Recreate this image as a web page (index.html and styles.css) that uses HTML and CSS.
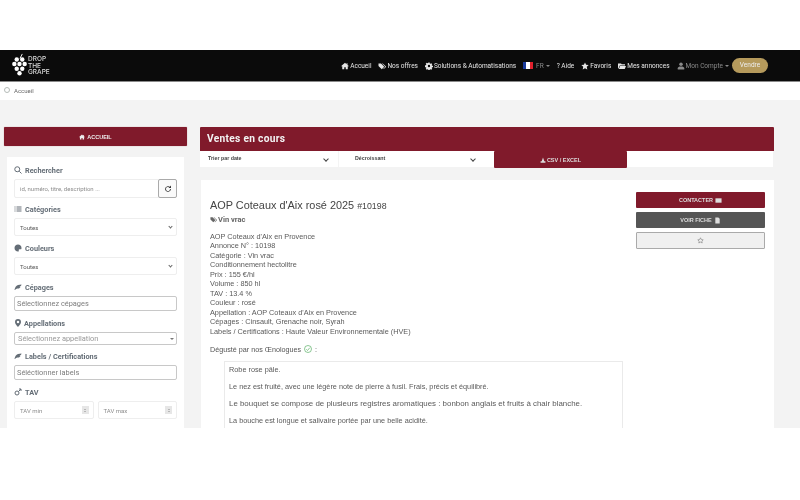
FILE: index.html
```html
<!DOCTYPE html>
<html lang="fr">
<head>
<meta charset="utf-8">
<title>Drop The Grape</title>
<link rel="stylesheet" href="styles.css">
</head>
<body>
<svg class="defs" width="0" height="0" aria-hidden="true">
  <symbol id="i-home" viewBox="0 0 16 16"><path d="M8 1.500 0.500 8l1 1L2.500 8.300V14.500h4v-4h3v4h4V8.300l1 .7 1-1-2.500-2.200V2.500h-2v2.200z" fill="currentColor"/></symbol>
  <symbol id="i-tags" viewBox="0 0 16 16"><path d="M1 3v5l6.500 6.500 5-5L6 3z M8 3l6.500 6.500-4 4 1 .5 5-4.500L9.500 3z" fill="currentColor"/></symbol>
  <symbol id="i-cog" viewBox="0 0 16 16"><path fill-rule="evenodd" d="M6.700 1h2.600l.3 2 1.300.6 1.700-1.100 1.900 1.900-1.100 1.700.6 1.300 2 .3v2.600l-2 .3-.6 1.300 1.100 1.700-1.900 1.900-1.700-1.100-1.300.6-.3 2H6.700l-.3-2-1.300-.6-1.700 1.100-1.900-1.900 1.100-1.700-.6-1.300-2-.3V6.700l2-.3.6-1.300-1.100-1.700 1.900-1.900 1.700 1.100 1.300-.6zM8 5.600a2.400 2.400 0 1 0 0 4.800 2.400 2.400 0 0 0 0-4.800z" fill="currentColor"/></symbol>
  <symbol id="i-star" viewBox="0 0 16 16"><path d="m8 .8 2.200 4.800 5.200.6-3.900 3.500 1.100 5.200L8 12.300l-4.600 2.600 1.100-5.200L.6 6.200l5.200-.6z" fill="currentColor"/></symbol>
  <symbol id="i-folder" viewBox="0 0 16 16"><path d="M0 3h6l1.500 1.500H14V7H3.500L1 13H0zM4.200 8H16l-2.500 6H1.700z" fill="currentColor"/></symbol>
  <symbol id="i-user" viewBox="0 0 16 16"><circle cx="8" cy="4.500" r="3.500" fill="currentColor"/><path d="M1.500 15v-2.500C1.500 10 4 9 8 9s6.500 1 6.500 3.500V15z" fill="currentColor"/></symbol>
  <symbol id="i-leaf" viewBox="0 0 16 16"><path d="M1 14C2 9 4 5 8 4l7-1-1 3-3 1 2 1-3 3H7l-3 1-2 2z" fill="currentColor"/></symbol>
  <symbol id="i-down" viewBox="0 0 16 16"><path d="M8 1 4.500 11H1.500v4h13v-4h-3z" fill="currentColor"/></symbol>
</svg>
<div class="topgap"></div>
<nav class="navbar">
  <a class="logo">
    <svg class="logo-mark" viewBox="0 0 16 26" width="17" height="24">
      <path d="M8.500 6 11 1" stroke="#fff" stroke-width="1" fill="none"/>
      <g fill="#fff">
        <circle cx="5" cy="7" r="2.400"/><circle cx="11" cy="7" r="2.400"/>
        <circle cx="2.400" cy="12" r="2.400"/><circle cx="8" cy="12" r="2.400"/><circle cx="13.600" cy="12" r="2.400"/>
        <circle cx="5" cy="17" r="2.400"/><circle cx="11" cy="17" r="2.400"/>
        <circle cx="8" cy="22" r="2.400"/>
      </g>
    </svg>
    <span class="logo-text">DROP<br>THE<br>GRAPE</span>
  </a>
  <div class="menu">
    <a class="item"><svg class="ic"><use href="#i-home"/></svg>Accueil</a>
    <a class="item"><svg class="ic"><use href="#i-tags"/></svg>Nos offres</a>
    <a class="item"><svg class="ic"><use href="#i-cog"/></svg>Solutions &amp; Automatisations</a>
    <a class="item muted"><span class="flag"><i class="fb"></i><i class="fw"></i><i class="fr"></i></span>FR <span class="caret"></span></a>
    <a class="item">? Aide</a>
    <a class="item"><svg class="ic"><use href="#i-star"/></svg>Favoris</a>
    <a class="item"><svg class="ic"><use href="#i-folder"/></svg>Mes annonces</a>
    <a class="item muted"><svg class="ic"><use href="#i-user"/></svg>Mon Compte <span class="caret"></span></a>
    <a class="sell">Vendre</a>
  </div>
</nav>
<div class="crumb"><span class="crumb-dot"></span>Accueil</div>
<div class="page">
  <aside class="side">
    <a class="home-btn"><svg class="ic"><use href="#i-home"/></svg>ACCUEIL</a>
    <form class="filters">
      <div class="lab"><svg class="lab-ic" viewBox="0 0 16 16"><circle cx="6.500" cy="6.500" r="5" fill="none" stroke="currentColor" stroke-width="2"/><path d="m10.500 10.500 4.500 4.500" stroke="currentColor" stroke-width="2"/></svg>Rechercher</div>
      <div class="search">
        <span class="ph grow">id, numéro, titre, description ...</span>
        <span class="refresh"><svg viewBox="0 0 16 16" width="8" height="8"><path d="M13 8a5 5 0 1 1-1.500-3.500" fill="none" stroke="#333" stroke-width="1.800"/><path d="M14 1v5H9z" fill="#333"/></svg></span>
      </div>
      <div class="lab"><svg class="lab-ic" viewBox="0 0 16 16"><path d="M1 3h2v2H1zM5 3h10v2H5zM1 7h2v2H1zM5 7h10v2H5zM1 11h2v2H1zM5 11h10v2H5z" fill="currentColor"/></svg>Catégories</div>
      <div class="field"><span class="val grow">Toutes</span><span class="chev"></span></div>
      <div class="lab"><svg class="lab-ic" viewBox="0 0 16 16"><path fill-rule="evenodd" d="M8 1C4 1 1 4 1 8s3 7 7 7c1.500 0 2-1 1.500-2s0-2.500 1.500-2.500h2.500C15 10.500 15 9 15 8c0-4-3-7-7-7z" fill="currentColor"/></svg>Couleurs</div>
      <div class="field"><span class="val grow">Toutes</span><span class="chev"></span></div>
      <div class="lab"><svg class="lab-ic"><use href="#i-leaf"/></svg>Cépages</div>
      <div class="multi"><span class="ph2">Sélectionnez cépages</span></div>
      <div class="lab lab-tight"><svg class="lab-ic" viewBox="0 0 16 16"><path fill-rule="evenodd" d="M8 0a6 6 0 0 0-6 6c0 4 6 10 6 10s6-6 6-10a6 6 0 0 0-6-6zm0 3.500a2.500 2.500 0 1 1 0 5 2.500 2.500 0 0 1 0-5z" fill="currentColor"/></svg>Appellations</div>
      <div class="multi appel"><span class="ph2 grow">Sélectionnez appellation</span><span class="tri"></span></div>
      <div class="lab"><svg class="lab-ic"><use href="#i-leaf"/></svg>Labels / Certifications</div>
      <div class="multi"><span class="ph2">Séléctionner labels</span></div>
      <div class="lab"><svg class="lab-ic" viewBox="0 0 16 16"><circle cx="6" cy="10" r="4" fill="none" stroke="currentColor" stroke-width="2"/><path d="m9 7 5-5M10 2h4v4" stroke="currentColor" stroke-width="2" fill="none"/></svg>TAV</div>
      <div class="range">
        <div class="num"><span class="ph grow">TAV min</span><span class="spin"></span></div>
        <div class="num"><span class="ph grow">TAV max</span><span class="spin"></span></div>
      </div>
    </form>
  </aside>
  <main class="main">
    <h1 class="title">Ventes en cours</h1>
    <div class="sort">
      <div class="sort-sel"><span class="grow">Trier par date</span><span class="chev dark"></span></div>
      <div class="sort-sel second"><span class="grow">Décroissant</span><span class="chev dark"></span></div>
      <a class="csv"><svg class="ic"><use href="#i-down"/></svg>CSV / EXCEL</a>
    </div>
    <article class="card">
      <div class="body">
        <h2 class="name">AOP Coteaux d'Aix rosé 2025 <small>#10198</small></h2>
        <div class="type"><svg class="ic"><use href="#i-tags"/></svg>Vin vrac</div>
        <ul class="specs">
          <li>AOP Coteaux d'Aix en Provence</li>
          <li>Annonce N° : 10198</li>
          <li>Catégorie : Vin vrac</li>
          <li>Conditionnement hectolitre</li>
          <li>Prix : 155 €/hl</li>
          <li>Volume : 850 hl</li>
          <li>TAV : 13.4 %</li>
          <li>Couleur : rosé</li>
          <li>Appellation : AOP Coteaux d'Aix en Provence</li>
          <li>Cépages : Cinsault, Grenache noir, Syrah</li>
          <li>Labels / Certifications : Haute Valeur Environnementale (HVE)</li>
        </ul>
        <p class="tasted">Dégusté par nos Œnologues <svg class="check" viewBox="0 0 16 16"><circle cx="8" cy="8" r="7" fill="none" stroke="#3fa34d" stroke-width="1.200"/><path d="m4.500 8.500 2.500 2.500 4.500-5.500" fill="none" stroke="#3fa34d" stroke-width="1.200"/></svg> :</p>
        <div class="note">
          <p>Robe rose pâle.</p>
          <p>Le nez est fruité, avec une légère note de pierre à fusil. Frais, précis et équilibré.</p>
          <p class="wide">Le bouquet se compose de plusieurs registres aromatiques : bonbon anglais et fruits à chair blanche.</p>
          <p>La bouche est longue et salivaire portée par une belle acidité.</p>
        </div>
      </div>
      <div class="actions">
        <a class="act red">CONTACTER <svg class="ic" viewBox="0 0 16 16"><path d="M1 3h14v10H1z" fill="currentColor"/></svg></a>
        <a class="act gray">VOIR FICHE <svg class="ic" viewBox="0 0 16 16"><path d="M3 1h7l3 3v11H3z" fill="currentColor"/></svg></a>
        <a class="act fav"><svg class="ic" viewBox="0 0 16 16"><path d="m8 1.800 1.900 4 4.300.6-3.100 3 .8 4.300L8 11.600l-3.900 2.100.8-4.300-3.100-3 4.300-.6z" fill="none" stroke="currentColor" stroke-width="1.300"/></svg></a>
      </div>
    </article>
  </main>
</div>
</body>
</html>
```

FILE: styles.css
```css
* { box-sizing: border-box; }
html, body { margin: 0; padding: 0; height: 100%; overflow: hidden; background: #fff; }
body { font-family: "Liberation Sans", Arial, sans-serif; font-size: 8px; color: #555; filter: blur(.35px); }
.defs { position: absolute; }
.grow { flex: 1; min-width: 0; }
.topgap { height: 50px; }

.navbar { height: 32px; background: #0b0b0b; border-bottom: 1px solid #8a8a8a; display: flex; align-items: center; justify-content: space-between; padding: 0 32px 0 11px; }
.logo { display: flex; align-items: center; color: #ddd; }
.logo-mark { display: block; margin-top: -2px; }
.logo-text { font-family: "Inter", sans-serif; font-weight: 500; font-size: 6.500px; line-height: 6.600px; margin-top: 1px; }
.menu { display: flex; align-items: center; color: #e6e6e6; font-family: "Roboto", sans-serif; font-size: 6.500px; white-space: nowrap; }
.item { display: flex; align-items: center; margin-right: 7px; }
.item.muted { color: #8a8a8a; }
.ic { width: 8px; height: 8px; margin-right: 1px; flex: none; }
.flag { display: flex; width: 10px; height: 7px; margin-right: 3px; }
.flag i { flex: 1; }
.fb { background: #1a3a9c; }
.fw { background: #fff; }
.fr { background: #e0202c; }
.caret { width: 0; height: 0; margin-left: 2px; border-left: 2px solid transparent; border-right: 2px solid transparent; border-top: 2px solid currentColor; }
.sell { background: #b59a5c; color: #eee; height: 15px; line-height: 15px; width: 36px; margin-left: -4px; text-align: center; border-radius: 8px; }

.crumb { height: 18px; background: #fff; display: flex; align-items: center; padding: 0 0 2px 4px; font-family: "Roboto", sans-serif; font-size: 6px; color: #666; }
.crumb-dot { width: 6px; height: 6px; border: 1.500px solid #b5bcb8; border-radius: 50%; margin-right: 4px; }

.page { height: 328px; background: #f3f3f3; overflow: hidden; display: flex; align-items: flex-start; padding: 27px 26px 0 4px; gap: 13px; }
.side { width: 183px; flex: none; }
.home-btn { height: 19px; background: #801a2b; color: #eee; font-weight: bold; font-size: 5.500px; display: flex; align-items: center; justify-content: center; border-radius: 1px; box-shadow: 0 0 1px #a66; }
.home-btn .ic { width: 6px; height: 6px; margin-right: 2px; }
.filters { background: #fff; margin: 11px 3px 0; padding: 6px 7px 30px; height: 300px; }
.lab { font-family: "Roboto", sans-serif; font-size: 7.300px; font-weight: 700; color: #646d76; display: flex; align-items: center; height: 14px; margin-bottom: 2px; }
.lab-ic { width: 8px; height: 8px; margin-right: 3px; flex: none; }
.lab-tight .lab-ic { margin-right: 2px; }
.search, .field { display: flex; align-items: center; border: 1px solid #eee; border-radius: 2px; padding-left: 5px; margin-bottom: 5px; background: #fff; }
.search { height: 19px; padding-right: 0; margin-bottom: 4px; }
.field { height: 18px; padding-right: 4px; }
.ph { font-family: "Roboto", sans-serif; font-size: 6px; color: #8d8d8d; }
.val { font-family: "Roboto", sans-serif; font-size: 6px; color: #555; }
.refresh { width: 19px; height: 19px; margin: -1px -1px -1px 0; border: 1px solid #aaa; border-radius: 2px; display: flex; align-items: center; justify-content: center; background: #fafafa; }
.chev { width: 3px; height: 3px; border-right: 1px solid #666; border-bottom: 1px solid #666; transform: rotate(45deg); margin-top: -2px; }
.chev.dark { border-color: #444; width: 4px; height: 4px; }
.multi { height: 15px; border: 1px solid #c8c8c8; border-radius: 2px; display: flex; align-items: center; padding: 0 2px; background: #fff; margin-bottom: 5px; }
.appel { height: 13px; padding-left: 3px; margin-bottom: 4px; }
.ph2 { font-family: "Roboto", sans-serif; font-size: 7.400px; color: #7d7d7d; }
.appel .ph2 { color: #999; }
.tri { width: 0; height: 0; border-left: 2px solid transparent; border-right: 2px solid transparent; border-top: 2px solid #777; }
.range { display: flex; gap: 4px; }
.num { flex: 1; height: 18px; border: 1px solid #eee; border-radius: 2px; display: flex; align-items: center; padding: 0 4px 0 5px; }
.spin { width: 7px; height: 8px; background: #e6e6e6; display: flex; flex-direction: column; align-items: center; justify-content: center; gap: 1px; }
.spin::before, .spin::after { content: ""; width: 0; height: 0; border-left: 1.500px solid transparent; border-right: 1.500px solid transparent; }
.spin::before { border-bottom: 1.500px solid #888; }
.spin::after { border-top: 1.500px solid #888; }

.main { width: 574px; flex: none; }
.title { margin: 0; height: 24px; line-height: 24px; padding-left: 7px; background: #801a2b; color: #f2f2f2; font-family: "Roboto", sans-serif; font-size: 10.200px; font-weight: 700; letter-spacing: .3px; border-radius: 1px 1px 0 0; }
.sort { height: 16px; background: #fff; display: flex; align-items: flex-start; margin-right: 1px; }
.sort-sel { width: 133px; height: 16px; display: flex; padding: 4px 5px 0 8px; font-size: 5.300px; font-weight: bold; color: #444; background: #fff; }
.sort-sel .chev { margin-top: 2px; }
.sort-sel.second { width: 142px; padding-left: 16px; margin-left: 5px; border-left: 1px solid #f4f4f4; }
.csv { width: 133px; height: 17px; margin-left: 14px; background: #801a2b; color: #ddd; font-size: 5.500px; font-weight: bold; display: flex; align-items: center; justify-content: center; border-radius: 1px; }
.csv .ic { width: 6px; height: 6px; margin-right: 1px; }
.card { background: #fff; margin: 13px 0 0 1px; height: 260px; display: flex; padding: 0 9px 0 9px; }
.body { flex: 1; min-width: 0; }
.name { margin: 19px 0 0; font-weight: 400; font-size: 10.900px; line-height: 12px; color: #444; font-family: "Liberation Sans", sans-serif; }
.name small { font-size: 8.800px; }
.type { display: flex; align-items: center; margin-top: 3px; font-family: "Roboto", sans-serif; font-weight: 700; font-size: 7.500px; color: #666; }
.type .ic { width: 7px; height: 7px; margin-right: 1px; }
.specs { list-style: none; margin: 8px 0 0; padding: 0; font-size: 7.300px; line-height: 9.450px; color: #5a5a5a; }
.tasted { margin: 9px 0 0; font-size: 7.200px; line-height: 9px; display: flex; align-items: center; gap: 1px; white-space: pre; }
.check { width: 8px; height: 8px; }
.note { margin: 7px 0 0 14px; width: 399px; height: 72px; border: 1px solid #eaeaea; padding: 3px 4px; font-size: 7.300px; line-height: 9px; color: #5a5a5a; }
.note p { margin: 0 0 8px; }
.note .wide { font-size: 7.900px; }
.actions { width: 129px; flex: none; margin-top: 12px; margin-left: -2px; display: flex; flex-direction: column; gap: 4px; }
.act { height: 16px; display: flex; align-items: center; justify-content: center; font-size: 5.500px; font-weight: bold; border-radius: 1px; color: #ddd; }
.act .ic { width: 7px; height: 7px; margin: 0 0 0 2px; }
.red { background: #801a2b; }
.gray { background: #555; }
.fav { height: 17px; background: #f0f0f0; border: 1px solid #aaa; color: #777; }
.fav .ic { margin: 0; }
```
